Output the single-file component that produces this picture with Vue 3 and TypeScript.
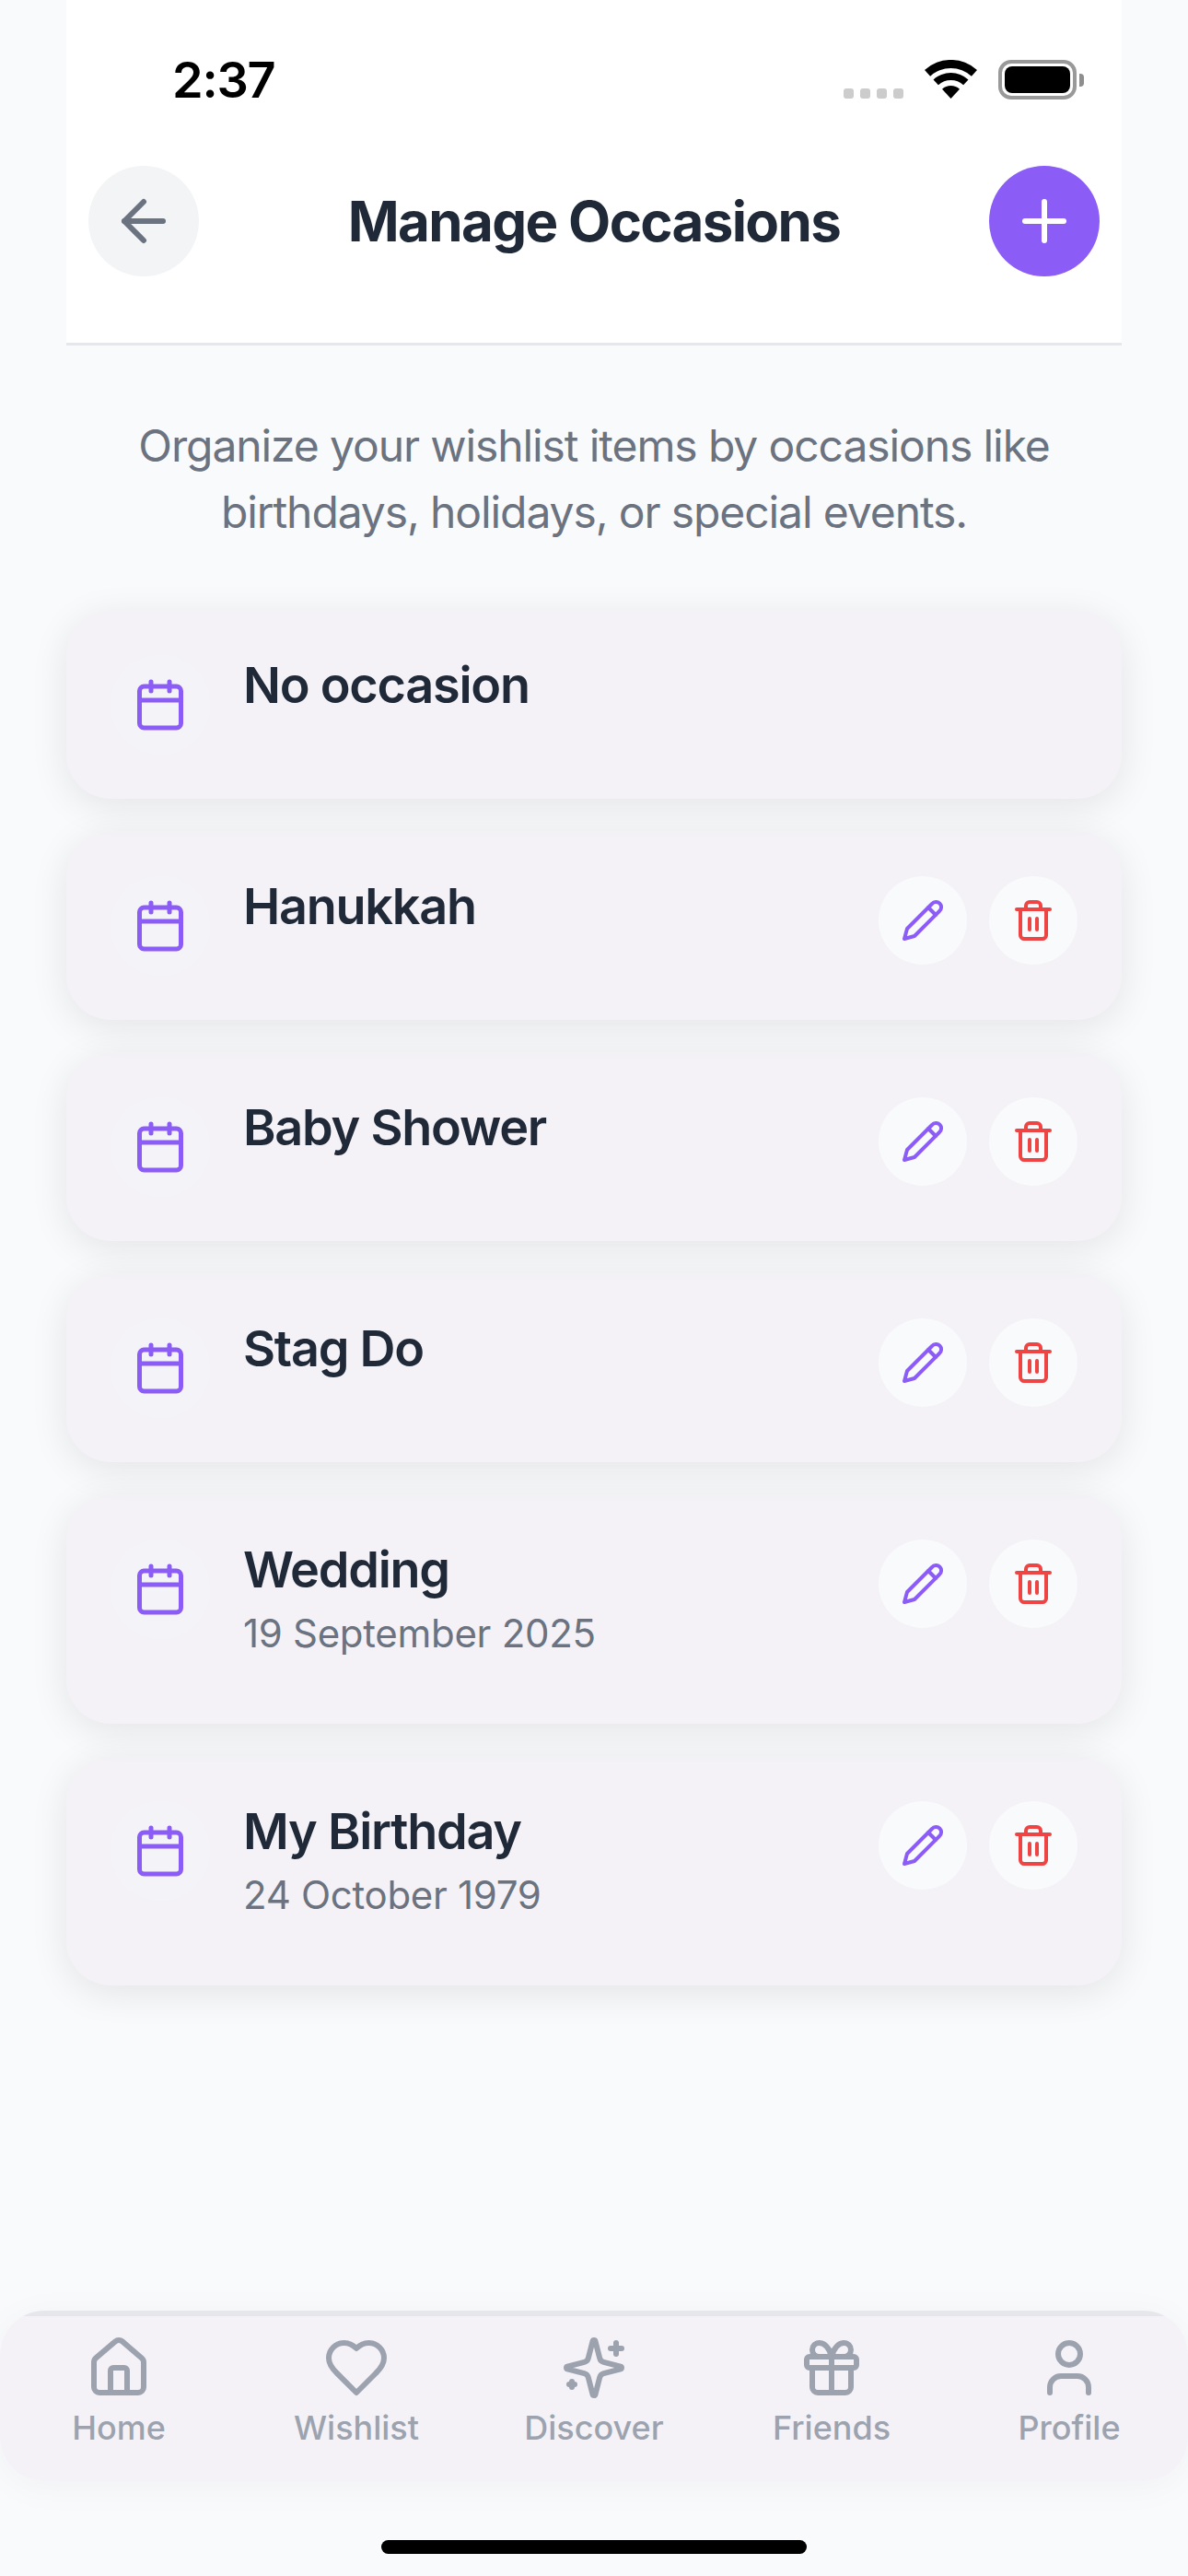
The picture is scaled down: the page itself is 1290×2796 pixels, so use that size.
<script setup lang="ts">
interface Occasion {
  name: string
  date?: string
  fixed?: boolean
}

interface NavItem {
  label: string
  paths: string[]
}

const occasions: Occasion[] = [
  { name: 'No occasion', fixed: true },
  { name: 'Hanukkah' },
  { name: 'Baby Shower' },
  { name: 'Stag Do' },
  { name: 'Wedding', date: '19 September 2025' },
  { name: 'My Birthday', date: '24 October 1979' },
]

const navItems: NavItem[] = [
  {
    label: 'Home',
    paths: [
      'M15 21v-8a1 1 0 0 0-1-1h-4a1 1 0 0 0-1 1v8',
      'M3 10a2 2 0 0 1 .709-1.528l7-6a2 2 0 0 1 2.582 0l7 6A2 2 0 0 1 21 10v9a2 2 0 0 1-2 2H5a2 2 0 0 1-2-2z',
    ],
  },
  {
    label: 'Wishlist',
    paths: [
      'M19 14c1.49-1.46 3-3.21 3-5.5A5.5 5.5 0 0 0 16.5 3c-1.76 0-3 .5-4.5 2-1.5-1.5-2.74-2-4.5-2A5.5 5.5 0 0 0 2 8.5c0 2.3 1.5 4.05 3 5.5l7 7Z',
    ],
  },
  {
    label: 'Discover',
    paths: [
      'M9.937 15.5A2 2 0 0 0 8.5 14.063l-6.135-1.582a.5.5 0 0 1 0-.962L8.5 9.936A2 2 0 0 0 9.937 8.5l1.582-6.135a.5.5 0 0 1 .963 0L14.063 8.5A2 2 0 0 0 15.5 9.937l6.135 1.581a.5.5 0 0 1 0 .964L15.5 14.063a2 2 0 0 0-1.437 1.437l-1.582 6.135a.5.5 0 0 1-.963 0z',
      'M20 3v4',
      'M22 5h-4',
      'M4 17v2',
      'M5 18H3',
    ],
  },
  {
    label: 'Friends',
    paths: [
      'M4 8h16a1 1 0 0 1 1 1v2a1 1 0 0 1-1 1H4a1 1 0 0 1-1-1V9a1 1 0 0 1 1-1z',
      'M12 8v13',
      'M19 12v7a2 2 0 0 1-2 2H7a2 2 0 0 1-2-2v-7',
      'M7.5 8a2.5 2.5 0 0 1 0-5A4.8 8 0 0 1 12 8a4.8 8 0 0 1 4.5-5 2.5 2.5 0 0 1 0 5',
    ],
  },
  {
    label: 'Profile',
    paths: [
      'M19 21v-2a4 4 0 0 0-4-4H9a4 4 0 0 0-4 4v2',
      'M8 7a4 4 0 1 0 8 0a4 4 0 1 0-8 0',
    ],
  },
]
</script>

<template>
  <div class="screen">
    <div class="page">
      <header class="header">
        <div class="status">
          <span class="time">2:37</span>
          <div class="status-icons">
            <div class="signal">
              <i></i><i></i><i></i><i></i>
            </div>
            <svg class="wifi" width="57" height="42" viewBox="0 0 57 42">
              <path d="M0 11.1A42 42 0 0 1 57 11.1L50.9 17.7A33 33 0 0 0 6.1 17.7Z" />
              <path d="M9.5 21.4A28 28 0 0 1 47.5 21.4L42.1 27.3A20 20 0 0 0 14.9 27.3Z" />
              <path d="M19 31.7A14 14 0 0 1 38 31.7L28.5 42Z" />
            </svg>
            <div class="battery">
              <div class="battery-body"><div class="battery-fill"></div></div>
              <div class="battery-cap"></div>
            </div>
          </div>
        </div>
        <div class="toolbar">
          <button class="round back">
            <svg class="ico" width="72" height="72" viewBox="0 0 24 24">
              <path d="m12 19-7-7 7-7" />
              <path d="M19 12H5" />
            </svg>
          </button>
          <h1 class="title">Manage Occasions</h1>
          <button class="round add">
            <svg class="ico" width="72" height="72" viewBox="0 0 24 24">
              <path d="M5 12h14" />
              <path d="M12 5v14" />
            </svg>
          </button>
        </div>
      </header>

      <p class="intro">
        Organize your wishlist items by occasions like birthdays, holidays, or special events.
      </p>

      <ul class="list">
        <li
          v-for="(o, i) in occasions"
          :key="o.name"
          class="card"
          :style="{ zIndex: occasions.length - i }"
        >
          <div class="cal-wrap">
            <svg class="ico cal" width="60" height="60" viewBox="0 0 24 24">
              <path d="M8 2v4" />
              <path d="M16 2v4" />
              <rect x="3" y="4" width="18" height="18" rx="2" />
              <path d="M3 10h18" />
            </svg>
          </div>
          <div class="info">
            <div class="name">{{ o.name }}</div>
            <div v-if="o.date" class="date">{{ o.date }}</div>
          </div>
          <div v-if="!o.fixed" class="actions">
            <button class="action edit">
              <svg class="ico" width="48" height="48" viewBox="0 0 24 24">
                <path d="M17 3a2.85 2.83 0 1 1 4 4L7.5 20.5 2 22l1.5-5.5Z" />
                <path d="m15 5 4 4" />
              </svg>
            </button>
            <button class="action del">
              <svg class="ico" width="48" height="48" viewBox="0 0 24 24">
                <path d="M3 6h18" />
                <path d="M19 6v14c0 1-1 2-2 2H7c-1 0-2-1-2-2V6" />
                <path d="M8 6V4c0-1 1-2 2-2h4c1 0 2 1 2 2v2" />
                <path d="M10 11v6" />
                <path d="M14 11v6" />
              </svg>
            </button>
          </div>
        </li>
      </ul>
    </div>

    <nav class="nav">
      <div v-for="item in navItems" :key="item.label" class="nav-item">
        <svg class="ico" width="72" height="72" viewBox="0 0 24 24">
          <path v-for="d in item.paths" :key="d" :d="d" />
        </svg>
        <span class="nav-label">{{ item.label }}</span>
      </div>
    </nav>
    <div class="home-bar-row">
      <div class="home-bar"></div>
    </div>
  </div>
</template>

<style scoped>
.screen {
  width: 1290px;
  height: 2796px;
  display: flex;
  flex-direction: column;
  overflow: hidden;
  background: #f9fafb;
  font-family: Inter, "Noto Sans", sans-serif;
}
.page {
  flex: 1;
  padding: 0 72px;
}
.header {
  background: #fff;
  border-bottom: 3px solid #e5e7eb;
}
.status {
  height: 180px;
  display: flex;
  justify-content: space-between;
  padding: 60px 41px 0 115px;
  box-sizing: border-box;
}
.time {
  font-size: 54px;
  font-weight: 600;
  line-height: 54px;
  letter-spacing: -1.2px;
  color: #000;
  height: 54px;
}
.status-icons {
  display: flex;
  align-items: flex-start;
  margin-top: 5px;
}
.signal {
  display: flex;
  gap: 7px;
  margin-top: 31px;
  margin-right: 23px;
}
.signal i {
  width: 11px;
  height: 11px;
  border-radius: 3px;
  background: #ccc;
}
.wifi {
  fill: #000;
  margin-right: 23px;
}
.battery {
  display: flex;
  align-items: center;
  height: 43px;
}
.battery-body {
  width: 85px;
  height: 43px;
  box-sizing: border-box;
  border: 4px solid #999;
  border-radius: 14px;
  padding: 3px;
}
.battery-fill {
  width: 100%;
  height: 100%;
  border-radius: 8px;
  background: #000;
}
.battery-cap {
  width: 5px;
  height: 14px;
  margin-left: 3px;
  border-radius: 0 4px 4px 0;
  background: #8e8e8e;
}
.toolbar {
  display: flex;
  align-items: center;
  justify-content: space-between;
  padding: 0 24px 72px;
}
.title {
  margin: 0;
  font-size: 60px;
  font-weight: 700;
  line-height: 72px;
  letter-spacing: -1.65px;
  color: #1f2937;
}
button {
  border: 0;
  padding: 0;
  display: flex;
  align-items: center;
  justify-content: center;
  border-radius: 50%;
}
.round {
  width: 120px;
  height: 120px;
}
.back {
  background: #f3f4f6;
  color: #6b7280;
}
.add {
  background: #8b5cf6;
  color: #fff;
}
.ico {
  display: block;
  fill: none;
  stroke: currentColor;
  stroke-width: 2;
  stroke-linecap: round;
  stroke-linejoin: round;
}
.intro {
  margin: 0;
  padding: 73px 48px 71px;
  font-size: 48px;
  line-height: 72px;
  letter-spacing: -1.1px;
  text-align: center;
  color: #6b7280;
}
.list {
  list-style: none;
  margin: 0;
  padding: 0;
  display: flex;
  flex-direction: column;
  gap: 36px;
}
.card {
  position: relative;
  display: flex;
  align-items: flex-start;
  padding: 48px;
  border-radius: 48px;
  background: #f4f2f7;
  box-shadow: 0 8px 42px rgba(0, 0, 0, 0.09);
}
.cal-wrap {
  flex: none;
  width: 108px;
  height: 108px;
  margin-right: 36px;
  display: flex;
  align-items: center;
  justify-content: center;
  border-radius: 50%;
  background: #f4f4f8;
  color: #8b5cf6;
}
.info {
  flex: 1;
  min-width: 0;
}
.name {
  font-size: 54px;
  font-weight: 600;
  line-height: 66px;
  letter-spacing: -1.25px;
  color: #1f2937;
}
.date {
  margin: 12px 0 26px;
  font-size: 42px;
  line-height: 48px;
  letter-spacing: -0.3px;
  color: #6b7280;
}
.actions {
  display: flex;
  gap: 24px;
}
.action {
  width: 96px;
  height: 96px;
  background: #f9fafb;
}
.edit {
  color: #8b5cf6;
}
.del {
  color: #ef4444;
}
.nav {
  display: grid;
  grid-template-columns: repeat(5, 1fr);
  height: 185px;
  box-sizing: border-box;
  padding-top: 26px;
  border-radius: 48px;
  background: linear-gradient(#e5e7eb 6px, #f4f2f7 6px);
  box-shadow: 0 6px 42px rgba(0, 0, 0, 0.04);
}
.nav-item {
  display: flex;
  flex-direction: column;
  align-items: center;
  color: #9ca3af;
}
.nav-label {
  font-size: 36px;
  font-weight: 500;
  line-height: 44px;
  margin-top: 7px;
}
.home-bar-row {
  height: 103px;
  display: flex;
  justify-content: center;
  padding-top: 64px;
  box-sizing: border-box;
}
.home-bar {
  width: 462px;
  height: 15px;
  border-radius: 8px;
  background: #000;
}
</style>
